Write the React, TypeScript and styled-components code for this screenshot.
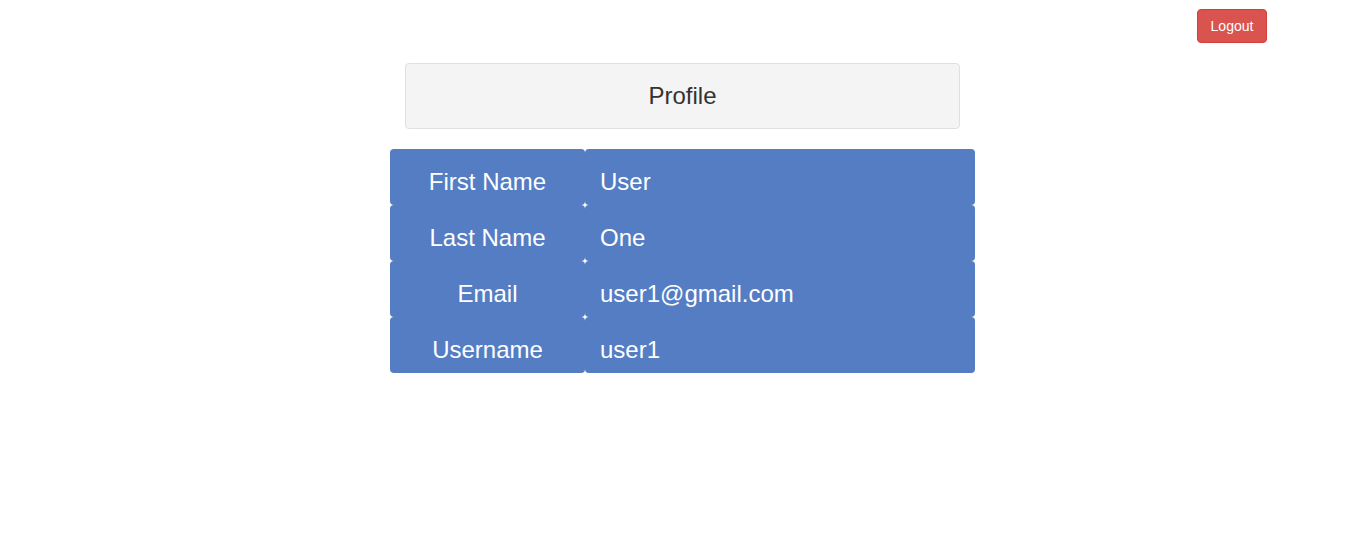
import React from "react";
import styled, { createGlobalStyle } from "styled-components";

const Global = createGlobalStyle`
  html, body { margin: 0; padding: 0; background: #fff; }
  body { font-family: "Liberation Sans", Arial, sans-serif; color: #333; }
`;

const Page = styled.div`
  width: 1365px;
  min-height: 537px;
  display: flex;
  flex-direction: column;
`;

const TopBar = styled.div`
  display: flex;
  justify-content: flex-end;
  padding: 9px 98px 0 0;
`;

const LogoutButton = styled.button`
  box-sizing: border-box;
  width: 70px;
  height: 34px;
  font-family: "Liberation Sans", Arial, sans-serif;
  font-size: 14px;
  line-height: 20px;
  padding: 6px 0;
  color: #fff;
  background: #d9534f;
  border: 1px solid #d43f3a;
  border-radius: 4px;
  cursor: pointer;
`;

const Main = styled.div`
  display: flex;
  flex-direction: column;
  align-items: center;
  margin-top: 20px;
`;

const Header = styled.div`
  box-sizing: border-box;
  width: 555px;
  height: 66px;
  background: #f4f4f4;
  border: 1px solid #e0e0e0;
  border-radius: 4px;
  display: flex;
  align-items: center;
  justify-content: center;
  font-size: 24px;
  color: #333;
`;

const Table = styled.div`
  margin-top: 20px;
  display: grid;
  grid-template-columns: 195px 390px;
`;

const Cell = styled.div<{ $label?: boolean }>`
  box-sizing: border-box;
  height: 56px;
  background: #547dc4;
  border-radius: 4px;
  color: #fff;
  font-size: 24px;
  display: flex;
  align-items: center;
  justify-content: ${(p) => (p.$label ? "center" : "flex-start")};
  padding: ${(p) => (p.$label ? "9px 0 0" : "9px 15px 0")};
`;

const rows: [string, string][] = [
  ["First Name", "User"],
  ["Last Name", "One"],
  ["Email", "user1@gmail.com"],
  ["Username", "user1"],
];

export default function App() {
  return (
    <Page>
      <Global />
      <TopBar>
        <LogoutButton>Logout</LogoutButton>
      </TopBar>
      <Main>
        <Header>Profile</Header>
        <Table>
          {rows.map(([k, v]) => (
            <React.Fragment key={k}>
              <Cell $label>{k}</Cell>
              <Cell>{v}</Cell>
            </React.Fragment>
          ))}
        </Table>
      </Main>
    </Page>
  );
}
